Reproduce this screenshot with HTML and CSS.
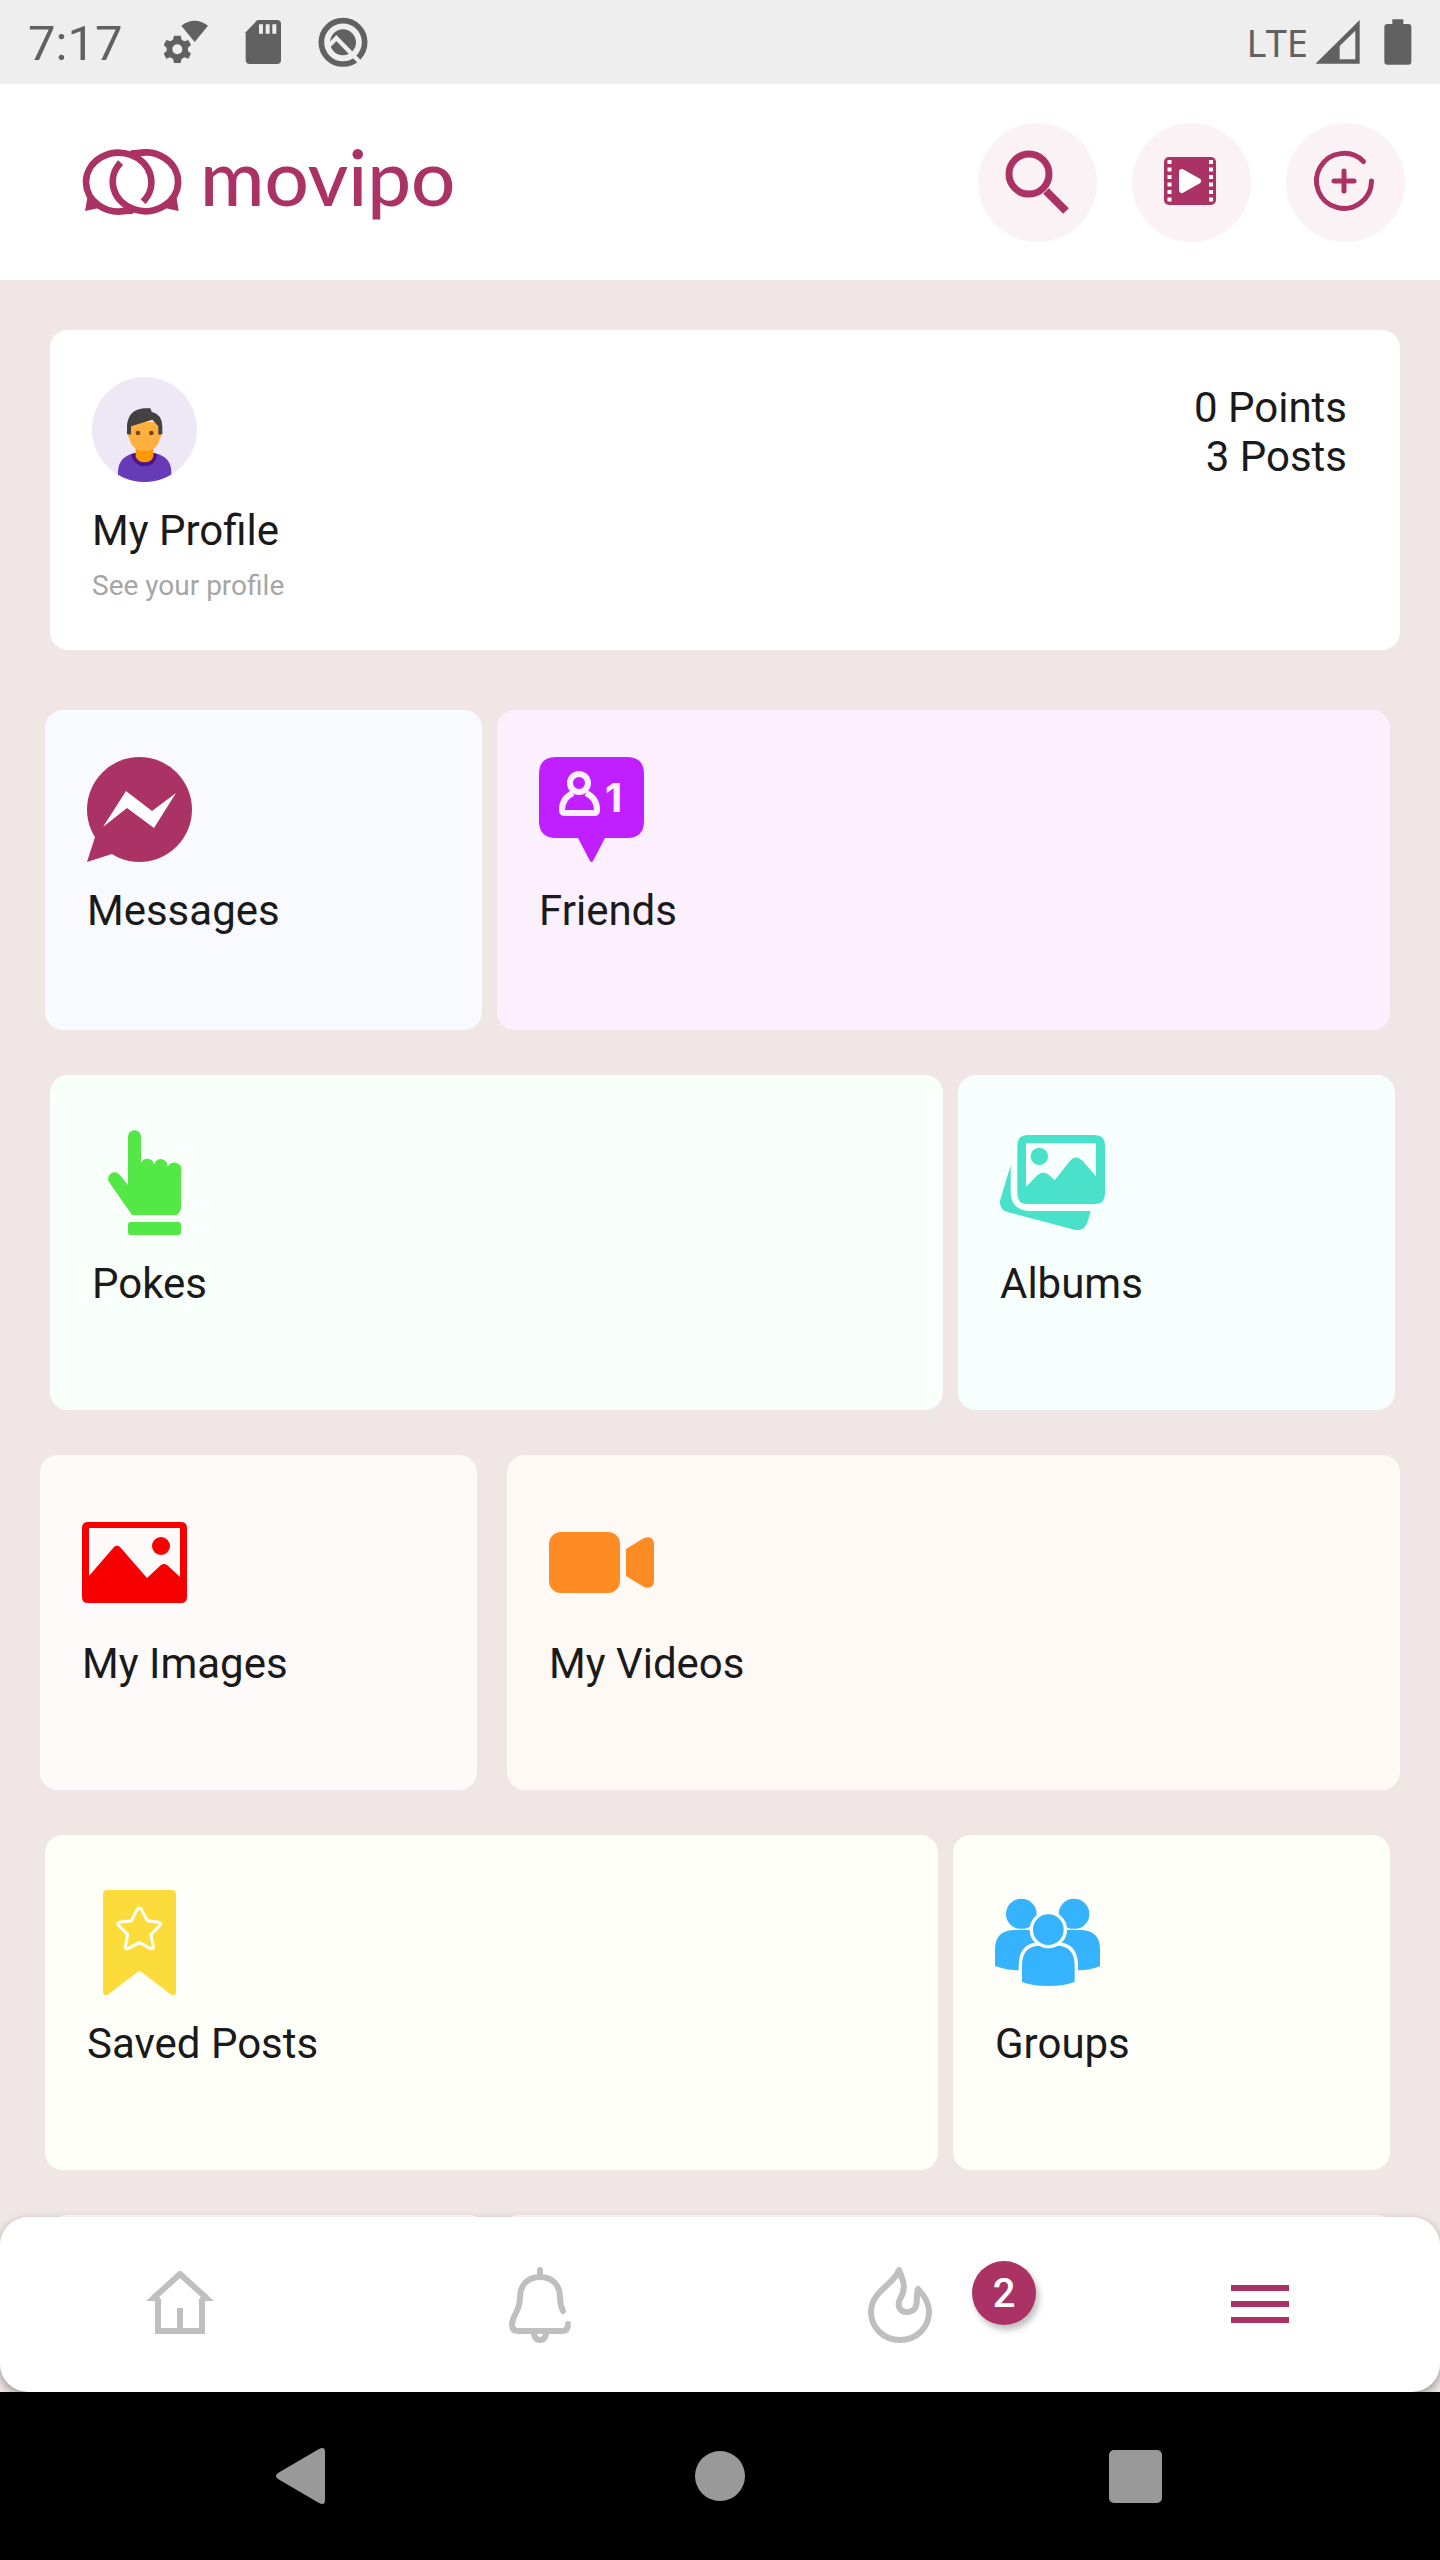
FILE: index.html
```html
<!DOCTYPE html>
<html lang="en">
<head>
<meta charset="utf-8">
<meta name="viewport" content="width=device-width, initial-scale=1">
<title>Movipo</title>
<link rel="stylesheet" href="styles.css">
</head>
<body>
<div class="screen">
  <div class="status">
    <div class="status-group">
      <span class="time">7:17</span>
      <svg width="44" height="44" viewBox="496 61 132 132" fill="#616161" aria-hidden="true">
        <path d="M588 127 548 78Q588 49 628 78Z"/>
        <path fill-rule="evenodd" d="M526 108h20l3 12 8 5 12-4 8 15-9 8v10l9 8-8 15-12-4-8 5-3 12h-20l-3-12-8-5-12 4-8-15 9-8v-10l-9-8 8-15 12 4 8-5ZM536 134a15 15 0 1 0 0 30 15 15 0 1 0 0-30Z"/>
      </svg>
      <svg width="38" height="44" viewBox="735 60 114 132" aria-hidden="true">
        <path fill="#616161" d="M775 60h59q12 0 12 12v108q0 12-12 12h-82q-12 0-12-12V97Z"/>
        <path fill="#eee" d="M780 73h12v28h-12zM800 73h12v28h-12zM820 73h12v28h-12z"/>
      </svg>
      <svg width="50" height="50" viewBox="949 51 150 150" fill="none" aria-hidden="true">
        <circle cx="1024" cy="127" r="65" stroke="#616161" stroke-width="17"/>
        <circle cx="1024" cy="127" r="39" fill="#616161"/>
        <path stroke="#eee" stroke-width="13" d="m980 139 24-25 76 78"/>
      </svg>
    </div>
    <div class="status-group status-right">
      <span class="network">LTE</span>
      <svg width="44" height="44" viewBox="1068 60 132 132" aria-hidden="true">
        <path fill="#616161" d="M1199 60v131h-132Z"/>
        <path fill="#eee" d="M1186 92v86h-47v-40Z"/>
      </svg>
      <svg class="battery" width="28" height="46" viewBox="1274 57 84 138" fill="#616161" aria-hidden="true">
        <path d="M1299 58h33v14h15q9 0 9 9v104q0 9-9 9h-63q-9 0-9-9V81q0-9 9-9h15Z"/>
      </svg>
    </div>
  </div>

  <header class="header">
    <a class="brand" href="#home">
      <svg width="100" height="67" viewBox="245 446 300 201" aria-hidden="true">
        <g fill="none" stroke="#ab3264" stroke-width="20">
          <path d="M428 604A98 88 0 1 0 385 629"/>
          <path d="M361 487A98 88 0 1 0 404 461"/>
        </g>
        <path fill="#ab3264" d="M378 614 410 628 396 641 372 642ZM412 475 380 463 394 449 418 448Z"/>
        <path fill="#ab3264" d="m262 588-8 44 46-10ZM528 588l7 44-46-10Z"/>
      </svg>
      <span class="brand-name">movipo</span>
    </a>
    <div class="actions">
      <button class="round" type="button" aria-label="Search">
        <svg viewBox="0 0 119 119" fill="none" stroke="#ab3264">
          <circle cx="51" cy="51" r="20" stroke-width="7"/>
          <path stroke-width="8" d="m68 68 20 20"/>
        </svg>
      </button>
      <button class="round" type="button" aria-label="Videos">
        <svg viewBox="0 0 119 119">
          <rect x="32" y="34" width="52" height="48" rx="5" fill="#ab3264"/>
          <g stroke="#fff" stroke-width="4" stroke-dasharray="4 3.5">
            <path d="M37.500 37v42M79 37v42"/>
          </g>
          <path fill="#fff" stroke="#fff" stroke-width="6" stroke-linejoin="round" d="m50 49 16 9-16 9Z"/>
        </svg>
      </button>
      <button class="round" type="button" aria-label="Create">
        <svg viewBox="0 0 119 119" fill="none" stroke="#ab3264" stroke-width="5" stroke-linecap="round">
          <path d="M85.500 58A27.500 27.500 0 1 1 77.500 38.500M58 48v20M48 58h20"/>
        </svg>
      </button>
    </div>
  </header>

  <main class="content">
    <a class="tile profile" href="#profile">
      <div>
        <svg class="icon" viewBox="186 200 315 315" aria-hidden="true">
          <defs><clipPath id="disc"><circle cx="343.500" cy="357.500" r="157.500"/></clipPath></defs>
          <g clip-path="url(#disc)">
            <path fill="#ede7f6" d="M186 200h315v315H186z"/>
            <path fill="#673ab7" d="M264 520v-35q0-45 50-57h60q50 12 50 57v35Z"/>
            <path fill="#4a148c" d="M303 432q10 36 41 36t38-36l-12-4h-54Z"/>
            <path fill="#ff9800" d="M317 405h53v34q-6 17-26 17t-27-17Z"/>
            <path fill="#ffb03f" d="M292 335h104v32q0 12-6 16-8 39-46 39t-46-39q-6-4-6-16Z"/>
            <path fill="#424242" d="M291 371v-22q2-50 50-55h20l4 10q32 8 32 45v22l-12 2v-25l-18-20-64 20v25Z"/>
            <circle cx="324" cy="368" r="7" fill="#784719"/><circle cx="364" cy="368" r="7" fill="#784719"/>
          </g>
        </svg>
        <h2 class="label">My Profile</h2>
        <p class="hint">See your profile</p>
      </div>
      <p class="stats">0 Points<br>3 Posts</p>
    </a>

    <div class="row row-first narrow-wide">
      <a class="tile messages" href="#messages">
        <svg class="icon" viewBox="0 0 105 105" aria-hidden="true">
          <circle cx="52.500" cy="52.500" r="52.500" fill="#ab3264"/>
          <path fill="#ab3264" d="M8 80 0 105l25-8 10-20Z"/>
          <path fill="#fff" d="m16 70 23-36 26 20 24-18-22 35-27-20Z"/>
        </svg>
        <h2 class="label">Messages</h2>
      </a>
      <a class="tile friends" href="#friends">
        <svg class="icon" viewBox="0 0 105 105" aria-hidden="true">
          <path fill="#c01fff" d="M17 0h71q17 0 17 17v47q0 17-17 17H66l-12 23q-1.500 2-3 0L39 81H17Q0 81 0 64V17Q0 0 17 0Z"/>
          <g fill="none" stroke="#fcf0ff" stroke-width="6">
            <circle cx="40" cy="26" r="9"/>
            <path stroke-linejoin="round" d="M34 36Q23 41 23 53q0 3 3 3h29q3 0 3-3 0-12-11-17"/>
          </g>
          <text class="count" x="66" y="55">1</text>
        </svg>
        <h2 class="label">Friends</h2>
      </a>
    </div>

    <div class="row row-right wide-narrow">
      <a class="tile tall pokes" href="#pokes">
        <svg class="icon" viewBox="186 210 315 315" fill="#53e846" aria-hidden="true">
          <path d="M294 375V230a19.500 19.500 0 0 1 39 0v80a20 20 0 0 1 39 5 20 20 0 0 1 41 6 20 20 0 0 1 40 17v105q0 12-13 22H306L237 366a19 19 0 0 1 33-20Z"/>
          <rect x="294" y="486" width="159" height="39" rx="8"/>
        </svg>
        <h2 class="label">Pokes</h2>
      </a>
      <a class="tile tall albums" href="#albums">
        <svg class="icon" viewBox="210 210 315 315" fill="#49e1c9" aria-hidden="true">
          <path fill-rule="evenodd" d="M293 225h201q31 0 31 31v145q0 31-31 31H293q-31 0-31-31V256q0-31 31-31ZM288 250v130l34-34q18-17 36 0l16 15 45-57q19-23 40 0l39 45v-99Z"/>
          <circle cx="328" cy="289" r="26"/>
          <path d="M242 316v83q2 48 50 54h190l-10 35q-10 25-36 22L232 456q-24-8-22-34Z"/>
        </svg>
        <h2 class="label">Albums</h2>
      </a>
    </div>

    <div class="row row-even narrow-wide">
      <a class="tile tall images" href="#images">
        <svg class="icon" viewBox="0 0 105 105" fill="#f80000" aria-hidden="true">
          <path fill-rule="evenodd" d="M6 12h93q6 0 6 6v69q0 6-6 6H6q-6 0-6-6V18q0-6 6-6ZM7 18v48l25-29q3-3 6 0l27 31 14-13q3-2 6 0l13 12V18Z"/>
          <circle cx="79" cy="36" r="9"/>
        </svg>
        <h2 class="label">My Images</h2>
      </a>
      <a class="tile tall videos" href="#videos">
        <svg class="icon" viewBox="0 0 105 105" fill="#ff8b25" aria-hidden="true">
          <rect y="22" width="71" height="61" rx="12"/>
          <path d="M77 39 95 28q10-3 10 7v35q0 10-10 7L77 66Z"/>
        </svg>
        <h2 class="label">My Videos</h2>
      </a>
    </div>

    <div class="row row-left wide-narrow">
      <a class="tile tall saved" href="#saved">
        <svg class="icon" viewBox="171 210 315 315" fill="#fcdc3b" aria-hidden="true">
          <path d="M232 210h193q13 0 13 13v290q0 18-16 10l-88-67q-5-4-11 0l-88 67q-16 8-16-10V223q0-13 13-13Z"/>
          <path fill="none" stroke="#fffffa" stroke-width="9" stroke-linejoin="round" d="M322 268q6-8 12 0l18 34 36 5q8 3 2 9l-27 27 7 38q-1 7-8 5l-34-18-34 18q-7 2-8-5l7-38-27-27q-6-6 2-9l36-5Z"/>
        </svg>
        <h2 class="label">Saved Posts</h2>
      </a>
      <a class="tile tall groups" href="#groups">
        <svg class="icon" viewBox="195 210 315 315" fill="#35b3ff" aria-hidden="true">
          <circle cx="274" cy="282" r="46"/><circle cx="432" cy="282" r="46"/>
          <path d="M195 438v-50q0-58 60-58h195q60 0 60 58v50q-30 13-65 13H265q-35 0-70-13Z"/>
          <g stroke="#fffffa" stroke-width="10">
            <path d="M271 489v-52q0-65 60-65h48q60 0 60 65v52q-35 14-84 14t-84-14Z"/>
            <circle cx="355" cy="329" r="51"/>
          </g>
          <path fill="#fffffa" d="M255 326h40v4h-40zM415 326h40v4h-40z"/>
        </svg>
        <h2 class="label">Groups</h2>
      </a>
    </div>

    <div class="row row-right narrow-wide">
      <div class="tile tall"></div>
      <div class="tile tall"></div>
    </div>
  </main>

  <nav class="tabs" aria-label="Main">
    <a class="tab" href="#home" aria-label="Home">
      <svg width="76" height="76" viewBox="0 0 76 76" fill="none" stroke="#bfbfbf" stroke-width="6" aria-hidden="true">
        <path d="M16 33v31h44V33M38 41v22"/>
        <path stroke-linejoin="round" d="M11 31.500 38 7l27 24.500"/>
        <path fill="#bfbfbf" stroke="none" d="M4 34 14 25l6 9ZM72 34 62 25l-6 9Z"/>
      </svg>
    </a>
    <a class="tab" href="#alerts" aria-label="Notifications">
      <svg width="76" height="76" viewBox="0 0 76 76" fill="none" stroke="#bfbfbf" stroke-width="6" stroke-linecap="round" aria-hidden="true">
        <path d="M38 3v6M61 44q-3-6-3-14C58 18 50 10 38 10S18 18 18 30c0 16-8 17-8 28q0 6 6 6h44q6 0 6-7M32 67q1 6 6 6t6-6"/>
      </svg>
    </a>
    <a class="tab" href="#trending" aria-label="Trending">
      <svg width="76" height="76" viewBox="0 0 76 76" fill="none" stroke="#bfbfbf" stroke-width="6" stroke-linejoin="round" aria-hidden="true">
        <path d="M37 3C32 18 9 24 9 45c0 16 13 28 29 28s29-12 29-28c0-10-5-17-11-23-3 7 3 23-11 23-8 0-10-7-7-13C45 21 41 13 37 3Z"/>
      </svg>
      <span class="badge">2</span>
    </a>
    <a class="tab" href="#menu" aria-label="Menu" aria-current="page">
      <svg width="58" height="40" viewBox="0 0 58 40" fill="#ab3264" aria-hidden="true">
        <path d="M0 0h58v6H0zM0 16h58v6H0zM0 32h58v6H0z"/>
      </svg>
    </a>
  </nav>

  <div class="system">
    <button class="key" type="button" aria-label="Back">
      <svg width="56" height="56" viewBox="0 0 56 56" fill="#999"><path d="M2 25 43 1q6-3 6 3v48q0 6-6 3L2 31q-4-3 0-6Z"/></svg>
    </button>
    <button class="key" type="button" aria-label="Home screen">
      <svg width="56" height="56" viewBox="0 0 56 56" fill="#999"><circle cx="28" cy="28" r="25"/></svg>
    </button>
    <button class="key" type="button" aria-label="Recent apps">
      <svg width="56" height="56" viewBox="0 0 56 56" fill="#999"><rect x="1" y="2" width="53" height="53" rx="5"/></svg>
    </button>
  </div>
</div>
</body>
</html>
```

FILE: styles.css
```css
* {
  box-sizing: border-box;
}

body {
  margin: 0;
  font-family: Roboto, sans-serif;
  color: #1a1a1a;
}

svg {
  display: block;
}

a {
  color: inherit;
  text-decoration: none;
}

button {
  padding: 0;
  border: 0;
  background: none;
}

h2,
p {
  margin: 0;
  font-weight: 400;
}

.screen {
  display: flex;
  flex-direction: column;
  height: 100vh;
  background: #efe6e5;
}

/* Status bar */
.status {
  display: flex;
  flex: none;
  justify-content: space-between;
  align-items: center;
  height: 84px;
  padding: 0 28px;
  background: #eee;
  color: #616161;
}

.status-group {
  display: flex;
  align-items: center;
  gap: 36px;
}

.status-right {
  gap: 8px;
}

.time {
  min-width: 100px;
  padding-top: 2px;
  font-size: 49px;
}

.network {
  font: 38px "Noto Sans", sans-serif;
}

.battery {
  margin-left: 16px;
}

/* Header */
.header {
  display: flex;
  flex: none;
  justify-content: space-between;
  align-items: center;
  height: 196px;
  padding: 0 35px 0 82px;
  background: #fff;
}

.brand {
  display: flex;
  align-items: center;
  gap: 18px;
  color: #ab3264;
}

.brand-name {
  padding-bottom: 12px;
  font: 500 78px/92px Lato, sans-serif;
}

.actions {
  display: flex;
  gap: 35px;
}

.round {
  width: 119px;
  height: 119px;
  border-radius: 50%;
  background: #fbf2f5;
}

/* Tiles */
.content {
  flex: 1;
  min-height: 0;
  padding-top: 50px;
  overflow: hidden;
}

.tile {
  display: block;
  height: 320px;
  padding: 47px 42px 0;
  border-radius: 18px;
  background: #fff;
}

.tall {
  height: 335px;
  padding-top: 55px;
}

.profile {
  display: flex;
  justify-content: space-between;
  margin: 0 40px 0 50px;
  padding-right: 53px;
}

.icon {
  width: 105px;
  height: 105px;
}

.label {
  margin-top: 24px;
  font-size: 42px;
  line-height: 49px;
}

.hint {
  margin-top: 14px;
  font-size: 28px;
  line-height: 33px;
  color: #a6a6a6;
}

.stats {
  padding-top: 6px;
  font-size: 42px;
  line-height: 49px;
  text-align: right;
}

.row {
  display: grid;
  gap: 15px;
  margin-top: 45px;
}

.narrow-wide {
  grid-template-columns: 437fr 893fr;
}

.wide-narrow {
  grid-template-columns: 893fr 437fr;
}

.row-first {
  margin-top: 60px;
  padding: 0 50px 0 45px;
}

.row-left {
  padding: 0 50px 0 45px;
}

.row-right {
  padding: 0 45px 0 50px;
}

.row-even {
  gap: 30px;
  padding: 0 40px;
}

.count {
  fill: #fcf0ff;
  font: 700 40px Inter, sans-serif;
}

.messages { background: #f8faff; }
.friends { background: #fcf0ff; }
.pokes { background: #f9fffb; }
.albums { background: #f7fffe; }
.images { background: #fffafa; }
.videos { background: #fff9f5; }
.saved,
.groups { background: #fffffa; }

/* Bottom tabs */
.tabs {
  display: grid;
  flex: none;
  grid-template-columns: repeat(4, 1fr);
  height: 175px;
  border-radius: 28px;
  background: #fff;
  box-shadow: 0 4px 10px rgba(0, 0, 0, 0.35);
}

.tab {
  display: flex;
  position: relative;
  justify-content: center;
  align-items: center;
}

.badge {
  position: absolute;
  top: 44px;
  left: calc(50% + 72px);
  width: 64px;
  height: 64px;
  border-radius: 50%;
  background: #ab3264;
  box-shadow: 3px 5px 6px rgba(0, 0, 0, 0.25);
  color: #fff;
  font-size: 40px;
  font-weight: 500;
  line-height: 66px;
  text-align: center;
}

/* System keys */
.system {
  display: grid;
  position: relative;
  flex: none;
  grid-template-columns: repeat(3, 1fr);
  height: 168px;
  padding: 0 96px;
  background: #000;
}

.key {
  display: flex;
  justify-content: center;
  align-items: center;
}
```
